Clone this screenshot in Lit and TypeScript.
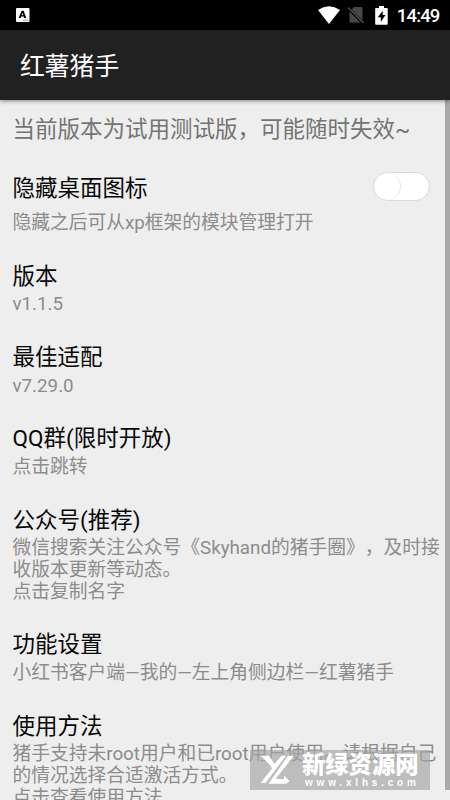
import { LitElement, html, css, nothing } from "lit";
import { customElement, property } from "lit/decorators.js";

interface Preference {
  title: string;
  summary: string[];
  toggle?: boolean;
}

const PREFERENCES: Preference[] = [
  { title: "隐藏桌面图标", summary: ["隐藏之后可从xp框架的模块管理打开"], toggle: true },
  { title: "版本", summary: ["v1.1.5"] },
  { title: "最佳适配", summary: ["v7.29.0"] },
  { title: "QQ群(限时开放)", summary: ["点击跳转"] },
  {
    title: "公众号(推荐)",
    summary: ["微信搜索关注公众号《Skyhand的猪手圈》，及时接", "收版本更新等动态。", "点击复制名字"],
  },
  { title: "功能设置", summary: ["小红书客户端—我的—左上角侧边栏—红薯猪手"] },
  {
    title: "使用方法",
    summary: ["猪手支持未root用户和已root用户使用。请根据自己", "的情况选择合适激活方式。", "点击查看使用方法"],
  },
];

@customElement("status-bar")
export class StatusBar extends LitElement {
  static styles = css`
    :host {
      display: flex;
      align-items: center;
      height: 30px;
      padding: 0 10.5px 0 16px;
      background: #000;
      color: #fff;
      flex: none;
    }
    svg { display: block; flex: none; }
    .gap { flex: 1; }
    .wifi { margin-right: 8px; }
    .sim { margin-right: 11px; }
    .battery { margin-right: 9px; }
    .time { font-size: 18.5px; font-weight: 500; line-height: 30px; padding-top: 2px; letter-spacing: -0.85px; }
  `;
  render() {
    return html`
      <svg width="14" height="16" viewBox="0 0 14 16">
        <rect y="1" width="13.5" height="14" rx="1" fill="#fff" />
        <path d="M2.7 11 5.6 3.7h2L10.3 11H8.2L7.7 9.6H5.2L4.7 11zM5.7 8.2h1.5L6.5 5.8z" fill="#000" fill-rule="evenodd" />
        <path d="M7 13.2h5.5" stroke="#777" stroke-width=".8" />
      </svg>
      <span class="gap"></span>
      <svg class="wifi" width="22" height="18" viewBox="0 0 22 18">
        <path d="M0 4Q11-3.4 22 4L11 18Z" fill="#fff" />
      </svg>
      <svg class="sim" width="16" height="18" viewBox="0 0 16 18">
        <path d="M6 1h7.5q1 0 1 1v14.5H1.5V5.5z" fill="#484848" />
        <path d="M0 2 15.5 17.5" stroke="#000" stroke-width="3" />
        <path d="M0 1.5 15.5 17" stroke="#555" stroke-width="1.2" />
      </svg>
      <svg class="battery" width="13" height="19" viewBox="0 0 13 19">
        <path d="M4 0h5v2h3q.7 0 .7.7V18q0 .8-.7.8H1q-.8 0-.8-.8V2.7q0-.7.8-.7h3z" fill="#fff" />
        <path d="M7.7 4.7 2.8 11.3h3v4.7l4.700-7H7.7z" fill="#000" />
      </svg>
      <span class="time">14:49</span>
    `;
  }
}

@customElement("preference-item")
export class PreferenceItem extends LitElement {
  @property({ attribute: false }) item!: Preference;

  static styles = css`
    :host { display: block; white-space: nowrap; }
    .head { display: flex; align-items: center; justify-content: space-between; height: 34px; padding-right: 15.5px; }
    .title { font-size: 22.5px; line-height: 34px; color: #080808; }
    .line { font-size: 18.75px; line-height: 21.8px; color: #8c8c8c; }
    .summary { padding-top: 1.5px; }
    .spaced { padding-top: 8.3px; }
    .switch {
      width: 57px; height: 29px; box-sizing: border-box; border-radius: 15px;
      background: #fff; border: 1px solid #dadada; margin-bottom: 3px;
    }
    .thumb {
      width: 27px; height: 27px; box-sizing: border-box; border-radius: 50%;
      border-right: 1px solid #e2e2e2;
    }
  `;
  render() {
    const { title, summary, toggle } = this.item;
    return html`
      <div class="head">
        <span class="title">${title}</span>
        ${toggle ? html`<div class="switch"><div class="thumb"></div></div>` : nothing}
      </div>
      <div class=${toggle ? "spaced" : "summary"}>
        ${summary.map((line) => html`<div class="line">${line}</div>`)}
      </div>
    `;
  }
}

@customElement("site-watermark")
export class SiteWatermark extends LitElement {
  static styles = css`
    :host {
      display: flex; box-sizing: border-box; width: 180px; height: 40px;
      padding-left: 10px; background: rgba(164, 164, 164, 0.66); color: #fff; white-space: nowrap;
    }
    svg { display: block; flex: none; margin-top: 4px; }
    .words { margin-left: 7px; padding-top: 4px; }
    .name { font-size: 23.3px; line-height: 23px; font-weight: 900; }
    .url { font: 700 10px/10px "Liberation Sans", sans-serif; letter-spacing: 3.8px; padding: 1px 0 0 3px; }
  `;
  render() {
    return html`
      <svg width="35" height="32" viewBox="0 0 35 32">
        <path d="M.7 1.7H9l5.5 8.3 7-8.3h4.5L5.5 29H.7L12 14.5l-2-3.500z" fill="#fff" />
        <path d="M28 1.7h6L15.5 25H24v-3.5l5.5 5.5-3.5 2.7H8.5z" fill="#fff" />
      </svg>
      <div class="words">
        <div class="name">新绿资源网</div>
        <div class="url">www.xlhs.com</div>
      </div>
    `;
  }
}

@customElement("app-root")
export class AppRoot extends LitElement {
  static styles = css`
    :host {
      display: flex; flex-direction: column; position: relative;
      width: 450px; height: 800px; overflow: hidden; background: #eee;
      font-family: Roboto, "Noto Sans CJK SC", sans-serif;
      text-spacing-trim: space-all;
    }
    .toolbar {
      flex: none; height: 70px; box-sizing: border-box; padding: 2px 0 0 20px; background: #212121;
      color: #fff; font-size: 24.8px; line-height: 69px; z-index: 1;
      box-shadow: 0 1px 4px rgba(0, 0, 0, 0.45);
    }
    .body { flex: 1; min-height: 0; display: flex; overflow: hidden; }
    .list { flex: 1; min-width: 0; padding: 12px 0 0 12.5px; }
    .notice { font-size: 22.5px; line-height: 34px; color: #747474; white-space: nowrap; margin-bottom: 25px; }
    .items { display: flex; flex-direction: column; gap: 23.9px; }
    .scrollbar { flex: none; width: 5px; height: 690px; background: #a9a9a9; }
    .mark { position: absolute; right: 20px; bottom: 10px; }
  `;
  render() {
    return html`
      <status-bar></status-bar>
      <div class="toolbar">红薯猪手</div>
      <div class="body">
        <div class="list">
          <div class="notice">当前版本为试用测试版，可能随时失效~</div>
          <div class="items">
            ${PREFERENCES.map((p) => html`<preference-item .item=${p}></preference-item>`)}
          </div>
        </div>
        <div class="scrollbar"></div>
      </div>
      <site-watermark class="mark"></site-watermark>
    `;
  }
}
